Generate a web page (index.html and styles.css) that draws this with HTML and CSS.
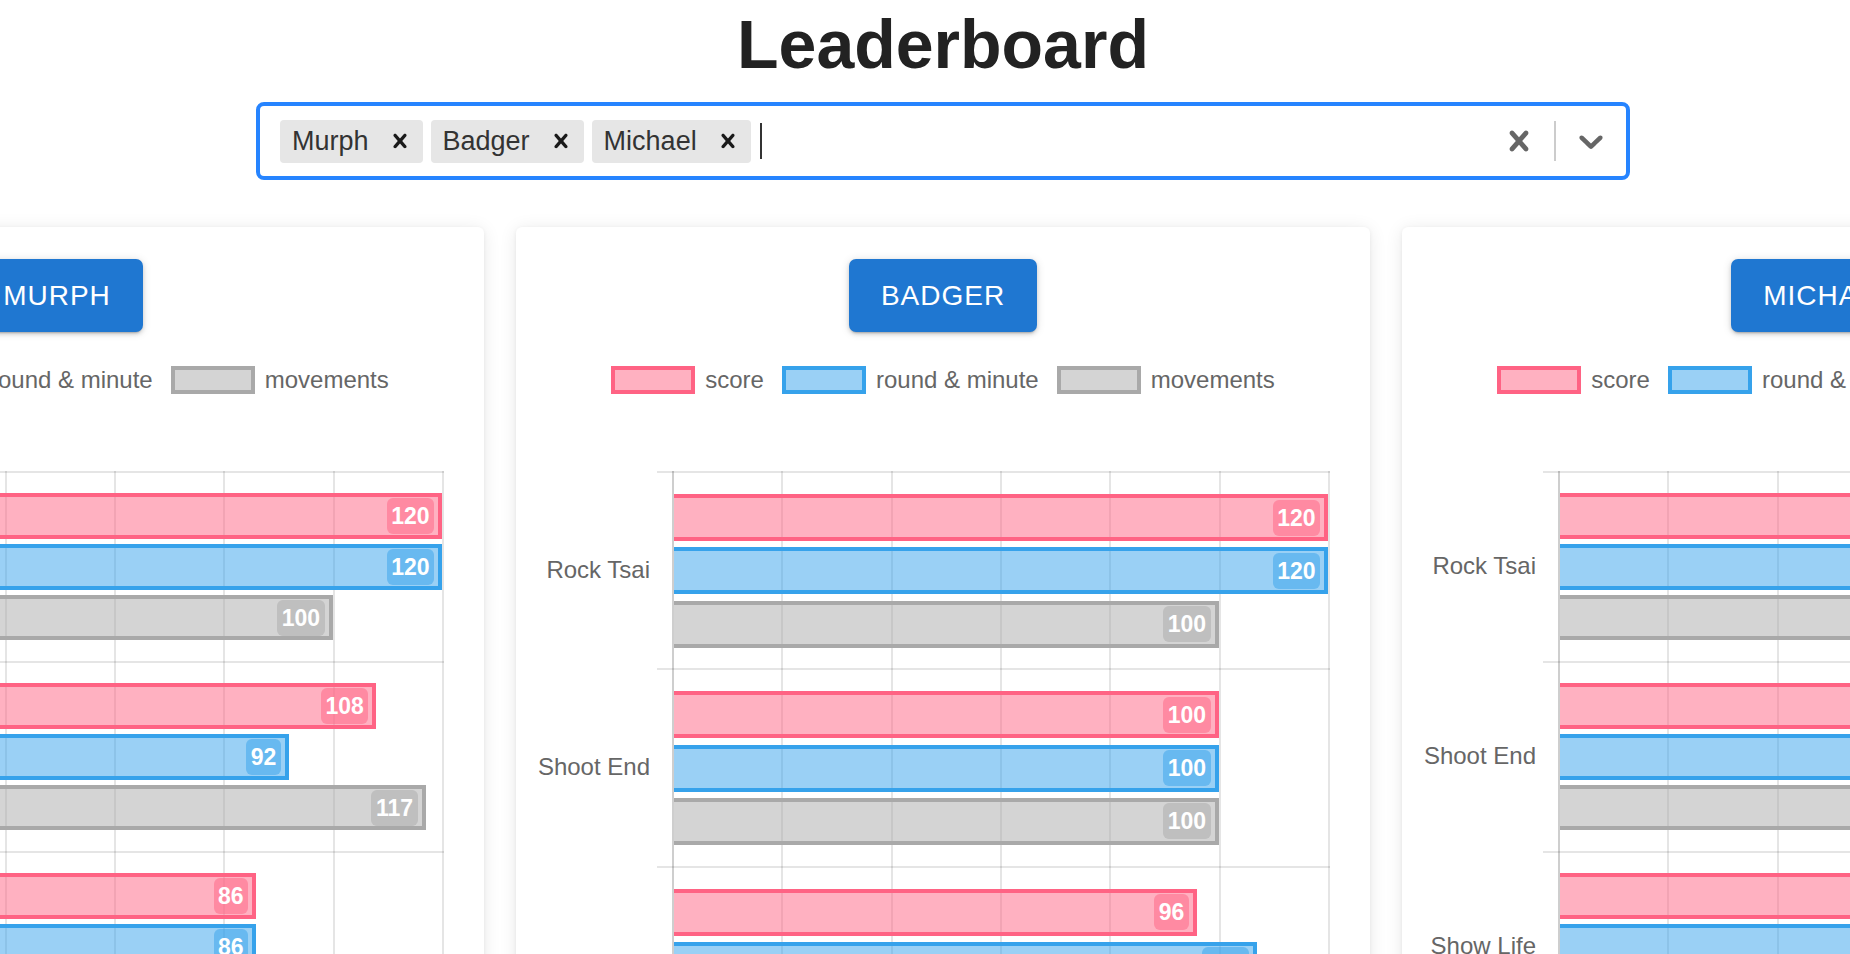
FILE: index.html
```html
<!DOCTYPE html>
<html lang="en">
<head>
<meta charset="utf-8">
<title>Leaderboard</title>
<link rel="stylesheet" href="styles.css">
</head>
<body>
<div class="page">
  <h1 class="title">Leaderboard</h1>

  <div class="select">
    <div class="values">
      <div class="tag">
        <span class="tag-label">Murph</span>
        <span class="tag-remove"><svg viewBox="0 0 20 20" aria-hidden="true"><path d="M14.348 14.849c-0.469 0.469-1.229 0.469-1.697 0l-2.651-3.030-2.651 3.029c-0.469 0.469-1.229 0.469-1.697 0-0.469-0.469-0.469-1.229 0-1.697l2.758-3.15-2.759-3.152c-0.469-0.469-0.469-1.228 0-1.697s1.228-0.469 1.697 0l2.652 3.031 2.651-3.031c0.469-0.469 1.228-0.469 1.697 0s0.469 1.229 0 1.697l-2.758 3.152 2.758 3.15c0.469 0.469 0.469 1.229 0 1.698z"/></svg></span>
      </div>
      <div class="tag">
        <span class="tag-label">Badger</span>
        <span class="tag-remove"><svg viewBox="0 0 20 20" aria-hidden="true"><path d="M14.348 14.849c-0.469 0.469-1.229 0.469-1.697 0l-2.651-3.030-2.651 3.029c-0.469 0.469-1.229 0.469-1.697 0-0.469-0.469-0.469-1.229 0-1.697l2.758-3.15-2.759-3.152c-0.469-0.469-0.469-1.228 0-1.697s1.228-0.469 1.697 0l2.652 3.031 2.651-3.031c0.469-0.469 1.228-0.469 1.697 0s0.469 1.229 0 1.697l-2.758 3.152 2.758 3.15c0.469 0.469 0.469 1.229 0 1.698z"/></svg></span>
      </div>
      <div class="tag">
        <span class="tag-label">Michael</span>
        <span class="tag-remove"><svg viewBox="0 0 20 20" aria-hidden="true"><path d="M14.348 14.849c-0.469 0.469-1.229 0.469-1.697 0l-2.651-3.030-2.651 3.029c-0.469 0.469-1.229 0.469-1.697 0-0.469-0.469-0.469-1.229 0-1.697l2.758-3.15-2.759-3.152c-0.469-0.469-0.469-1.228 0-1.697s1.228-0.469 1.697 0l2.652 3.031 2.651-3.031c0.469-0.469 1.228-0.469 1.697 0s0.469 1.229 0 1.697l-2.758 3.152 2.758 3.15c0.469 0.469 0.469 1.229 0 1.698z"/></svg></span>
      </div>
      <span class="caret"></span>
    </div>
    <div class="indicators">
      <span class="ind"><svg viewBox="0 0 20 20" aria-hidden="true"><path d="M14.348 14.849c-0.469 0.469-1.229 0.469-1.697 0l-2.651-3.030-2.651 3.029c-0.469 0.469-1.229 0.469-1.697 0-0.469-0.469-0.469-1.229 0-1.697l2.758-3.15-2.759-3.152c-0.469-0.469-0.469-1.228 0-1.697s1.228-0.469 1.697 0l2.652 3.031 2.651-3.031c0.469-0.469 1.228-0.469 1.697 0s0.469 1.229 0 1.697l-2.758 3.152 2.758 3.15c0.469 0.469 0.469 1.229 0 1.698z"/></svg></span>
      <span class="sep"></span>
      <span class="ind"><svg viewBox="0 0 20 20" aria-hidden="true"><path d="M4.516 7.548c0.436-0.446 1.043-0.481 1.576 0l3.908 3.747 3.908-3.747c0.533-0.481 1.141-0.446 1.574 0 0.436 0.445 0.408 1.197 0 1.615-0.406 0.418-4.695 4.502-4.695 4.502-0.217 0.223-0.502 0.335-0.787 0.335s-0.57-0.112-0.789-0.335c0 0-4.287-4.084-4.695-4.502s-0.436-1.17 0-1.615z"/></svg></span>
    </div>
  </div>

  <div class="cards">
    <!-- Murph -->
    <section class="card">
      <div class="card-head"><button class="btn">MURPH</button></div>
      <ul class="legend">
        <li class="legend-item"><span class="swatch swatch-score"></span>score</li>
        <li class="legend-item"><span class="swatch swatch-round"></span>round &amp; minute</li>
        <li class="legend-item"><span class="swatch swatch-move"></span>movements</li>
      </ul>
      <div class="chart chart-compact">
        <div class="cat">
          <div class="ylabel">Rock Tsai</div><div class="tick"></div>
          <div class="plot">
            <div class="bar bar-score" style="--v:120"><span class="val">120</span></div>
            <div class="bar bar-round" style="--v:120"><span class="val">120</span></div>
            <div class="bar bar-move" style="--v:100"><span class="val">100</span></div>
          </div>
        </div>
        <div class="cat">
          <div class="ylabel">Shoot End</div><div class="tick"></div>
          <div class="plot">
            <div class="bar bar-score" style="--v:108"><span class="val">108</span></div>
            <div class="bar bar-round" style="--v:92"><span class="val">92</span></div>
            <div class="bar bar-move" style="--v:117"><span class="val">117</span></div>
          </div>
        </div>
        <div class="cat">
          <div class="ylabel">Show Life</div><div class="tick"></div>
          <div class="plot">
            <div class="bar bar-score" style="--v:86"><span class="val">86</span></div>
            <div class="bar bar-round" style="--v:86"><span class="val">86</span></div>
            <div class="bar bar-move" style="--v:90"><span class="val">90</span></div>
          </div>
        </div>
      </div>
    </section>

    <!-- Badger -->
    <section class="card">
      <div class="card-head"><button class="btn">BADGER</button></div>
      <ul class="legend">
        <li class="legend-item"><span class="swatch swatch-score"></span>score</li>
        <li class="legend-item"><span class="swatch swatch-round"></span>round &amp; minute</li>
        <li class="legend-item"><span class="swatch swatch-move"></span>movements</li>
      </ul>
      <div class="chart chart-wide">
        <div class="cat">
          <div class="ylabel">Rock Tsai</div><div class="tick"></div>
          <div class="plot">
            <div class="bar bar-score" style="--v:120"><span class="val">120</span></div>
            <div class="bar bar-round" style="--v:120"><span class="val">120</span></div>
            <div class="bar bar-move" style="--v:100"><span class="val">100</span></div>
          </div>
        </div>
        <div class="cat">
          <div class="ylabel">Shoot End</div><div class="tick"></div>
          <div class="plot">
            <div class="bar bar-score" style="--v:100"><span class="val">100</span></div>
            <div class="bar bar-round" style="--v:100"><span class="val">100</span></div>
            <div class="bar bar-move" style="--v:100"><span class="val">100</span></div>
          </div>
        </div>
        <div class="cat">
          <div class="ylabel">Show Life</div><div class="tick"></div>
          <div class="plot">
            <div class="bar bar-score" style="--v:96"><span class="val">96</span></div>
            <div class="bar bar-round" style="--v:107"><span class="val">107</span></div>
            <div class="bar bar-move" style="--v:100"><span class="val">100</span></div>
          </div>
        </div>
      </div>
    </section>

    <!-- Michael -->
    <section class="card">
      <div class="card-head"><button class="btn">MICHAEL</button></div>
      <ul class="legend">
        <li class="legend-item"><span class="swatch swatch-score"></span>score</li>
        <li class="legend-item"><span class="swatch swatch-round"></span>round &amp; minute</li>
        <li class="legend-item"><span class="swatch swatch-move"></span>movements</li>
      </ul>
      <div class="chart chart-compact">
        <div class="cat">
          <div class="ylabel">Rock Tsai</div><div class="tick"></div>
          <div class="plot">
            <div class="bar bar-score" style="--v:120"><span class="val">120</span></div>
            <div class="bar bar-round" style="--v:120"><span class="val">120</span></div>
            <div class="bar bar-move" style="--v:100"><span class="val">100</span></div>
          </div>
        </div>
        <div class="cat">
          <div class="ylabel">Shoot End</div><div class="tick"></div>
          <div class="plot">
            <div class="bar bar-score" style="--v:110"><span class="val">110</span></div>
            <div class="bar bar-round" style="--v:105"><span class="val">105</span></div>
            <div class="bar bar-move" style="--v:100"><span class="val">100</span></div>
          </div>
        </div>
        <div class="cat">
          <div class="ylabel">Show Life</div><div class="tick"></div>
          <div class="plot">
            <div class="bar bar-score" style="--v:100"><span class="val">100</span></div>
            <div class="bar bar-round" style="--v:95"><span class="val">95</span></div>
            <div class="bar bar-move" style="--v:90"><span class="val">90</span></div>
          </div>
        </div>
      </div>
    </section>
  </div>
</div>
</body>
</html>
```

FILE: styles.css
```css
html, body {
  margin: 0;
  padding: 0;
  overflow: hidden;
  background: #fff;
}

body {
  font-family: "Liberation Sans", Arial, Helvetica, sans-serif;
}

.page {
  width: 1886px;
}

.title {
  margin: 6px 0 0;
  font-size: 68px;
  line-height: 76px;
  font-weight: 700;
  color: #222;
  text-align: center;
}

/* ---------- multi select ---------- */
.select {
  box-sizing: border-box;
  width: 1374px;
  height: 78px;
  margin: 20px auto 0;
  border: 4px solid #2684ff;
  border-radius: 8px;
  display: flex;
  align-items: center;
  background: #fff;
}

.values {
  flex: 1;
  display: flex;
  align-items: center;
  gap: 8px;
  padding-left: 20px;
}

.tag {
  display: flex;
  align-items: center;
  height: 43px;
  background: #e6e6e6;
  border-radius: 4px;
}

.tag-label {
  padding: 0 6px 0 12px;
  font-size: 27px;
  color: #333;
}

.tag-remove {
  display: flex;
  align-items: center;
  padding: 0 9px 0 11px;
  color: #1a1a1a;
}

.tag-remove svg {
  width: 28px;
  height: 28px;
  fill: currentColor;
}

.caret {
  width: 2px;
  height: 36px;
  background: #333;
  margin-left: 1px;
}

.indicators {
  display: flex;
  align-items: center;
}

.ind {
  display: flex;
  padding: 0 15px;
  color: #666;
}

.ind svg {
  width: 40px;
  height: 40px;
  fill: currentColor;
}

.sep {
  width: 2px;
  height: 40px;
  background: #ccc;
}

/* ---------- cards ---------- */
.cards {
  display: flex;
  justify-content: center;
  gap: 32px;
  margin-top: 47px;
}

.card {
  flex: 0 0 854px;
  box-sizing: border-box;
  height: 1000px;
  padding-top: 32px;
  background: #fff;
  border-radius: 6px;
  box-shadow: 0 2px 18px rgba(0, 0, 0, 0.09), 0 1px 4px rgba(0, 0, 0, 0.06);
}

.card-head {
  display: flex;
  justify-content: center;
}

.btn {
  height: 73px;
  padding: 0 32px;
  border: 0;
  border-radius: 7px;
  background: #1f77d1;
  color: #fff;
  font-family: "Liberation Sans", Arial, Helvetica, sans-serif;
  font-size: 28px;
  font-weight: 400;
  letter-spacing: 1px;
  box-shadow: 0 3px 2px -2px rgba(0, 0, 0, 0.2), 0 2px 4px rgba(0, 0, 0, 0.14), 0 1px 10px rgba(0, 0, 0, 0.12);
}

.legend {
  list-style: none;
  margin: 34px 0 0;
  padding: 0;
  display: flex;
  justify-content: center;
  gap: 18px;
  font-size: 24px;
  color: #666;
}

.legend-item {
  display: flex;
  align-items: center;
  gap: 10px;
  height: 28px;
}

.swatch {
  box-sizing: border-box;
  width: 84px;
  height: 28px;
  border: 4px solid;
}

.swatch-score { background: rgba(255, 99, 132, 0.5); border-color: #ff6384; }
.swatch-round { background: rgba(54, 162, 235, 0.5); border-color: #36a2eb; }
.swatch-move  { background: rgba(169, 169, 169, 0.5); border-color: #a9a9a9; }

/* ---------- chart ---------- */
.chart {
  margin: 77px 0 0 16px;
}

.cat {
  display: grid;
  grid-template-columns: 125px 15px 658px;
  height: 190px;
}

.chart-wide .cat {
  height: 197.3px;
}

.ylabel {
  display: flex;
  align-items: center;
  justify-content: flex-end;
  padding-right: 7px;
  font-size: 24px;
  color: #666;
  white-space: nowrap;
}

.tick {
  border-top: 2px solid rgba(0, 0, 0, 0.1);
}

.plot {
  border-top: 2px solid rgba(0, 0, 0, 0.1);
  background:
    linear-gradient(90deg, rgba(0, 0, 0, 0.1) 0 2px, transparent 2px),
    repeating-linear-gradient(90deg, rgba(0, 0, 0, 0.1) 0 2px, transparent 2px 109.333px);
  display: flex;
  flex-direction: column;
  gap: 5.3px;
  padding-top: 20.3px;
}

.chart-wide .plot {
  gap: 6.3px;
  padding-top: 21px;
}

.bar {
  box-sizing: border-box;
  flex: none;
  height: 45.5px;
  margin-left: 2px;
  width: calc(var(--v) * 5.46667px - 2px);
  border: 4px solid;
  border-left: 0;
  display: flex;
  align-items: center;
  justify-content: flex-end;
  padding-right: 4px;
}

.chart-wide .bar {
  height: 47px;
}

.val {
  height: 36px;
  line-height: 36px;
  padding: 0 4.5px;
  border-radius: 6px;
  font-size: 23px;
  font-weight: 700;
  color: #fff;
}

.bar-score { background: rgba(255, 99, 132, 0.5); border-color: #ff6384; }
.bar-score .val { background: rgba(255, 99, 132, 0.5); }

.bar-round { background: rgba(54, 162, 235, 0.5); border-color: #36a2eb; }
.bar-round .val { background: rgba(54, 162, 235, 0.5); }

.bar-move { background: rgba(169, 169, 169, 0.5); border-color: #a9a9a9; }
.bar-move .val { background: rgba(169, 169, 169, 0.5); }
```
